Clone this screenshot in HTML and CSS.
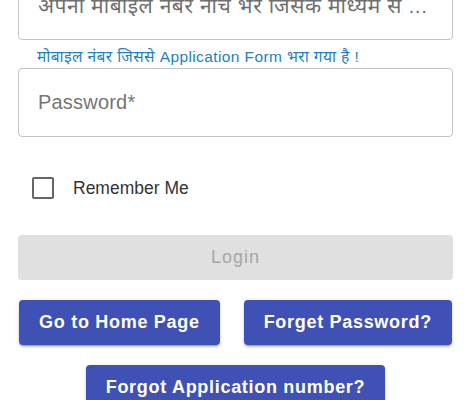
FILE: index.html
```html
<!DOCTYPE html>
<html lang="hi">
<head>
    <meta charset="UTF-8">
    <meta name="viewport" content="width=device-width, initial-scale=1.0">
    <title>Login</title>
    <link rel="stylesheet" href="styles.css">
</head>
<body>
    <div class="login-form">
        <div class="field">
            <div class="input-box mobile">
                <span class="placeholder hindi">अपना मोबाइल नंबर नीचे भरें जिसके माध्यम से ...</span>
            </div>
            <p class="helper">मोबाइल नंबर जिससे Application Form भरा गया है !</p>
        </div>

        <div class="field">
            <div class="input-box">
                <span class="placeholder">Password*</span>
            </div>
        </div>

        <label class="remember">
            <span class="checkbox"></span>
            <span>Remember Me</span>
        </label>

        <button class="btn btn-disabled" disabled>Login</button>

        <div class="links">
            <button class="btn btn-primary">Go to Home Page</button>
            <button class="btn btn-primary">Forget Password?</button>
            <button class="btn btn-primary">Forgot Application number?</button>
        </div>
    </div>
</body>
</html>
```

FILE: styles.css
```css
body {
    margin: 0;
    padding: 0;
    background: #fff;
    font-family: "Liberation Sans", Arial, "Noto Sans", sans-serif;
}
.login-form {
    margin-top: -29px;
    padding: 0 19px 0 18px;
}
.input-box {
    border: 1px solid #c4c4c4;
    border-radius: 4px;
    display: flex;
    align-items: center;
    padding: 0 19px;
    box-sizing: border-box;
    height: 69px;
}
.input-box.mobile {
    align-items: flex-start;
    padding-top: 19px;
}
.placeholder {
    color: #757575;
    font-size: 20px;
    letter-spacing: 0.2px;
    white-space: nowrap;
    overflow: hidden;
}
.placeholder.hindi {
    font-size: 21px;
    letter-spacing: 0.55px;
    color: #6f6f6f;
}
.helper {
    margin: 6px 0 0 19px;
    height: 22px;
    font-size: 15.5px;
    letter-spacing: 0.4px;
    color: #1f80c4;
    line-height: 22px;
    white-space: nowrap;
}
.remember {
    display: flex;
    align-items: center;
    gap: 19px;
    margin: 40px 0 0 14px;
    font-size: 17.5px;
    color: #333;
}
.checkbox {
    width: 18px;
    height: 18px;
    border: 2px solid #666;
    border-radius: 2px;
}
.btn {
    display: block;
    border: none;
    border-radius: 4px;
    font-family: inherit;
    font-size: 18px;
    font-weight: 700;
    letter-spacing: 0.7px;
    height: 45px;
    padding: 0 20px;
}
.btn-disabled {
    width: 100%;
    margin-top: 36px;
    background: #e0e0e0;
    color: #a6a6a6;
    font-weight: 400;
    letter-spacing: 1px;
}
.btn-primary {
    background: #3f51b5;
    color: #fff;
    box-shadow: 0 3px 1px -2px rgba(0,0,0,0.2), 0 2px 2px 0 rgba(0,0,0,0.14), 0 1px 5px 0 rgba(0,0,0,0.12);
}
.links {
    display: flex;
    flex-wrap: wrap;
    justify-content: center;
    gap: 20px 24px;
    margin-top: 20px;
}
```
